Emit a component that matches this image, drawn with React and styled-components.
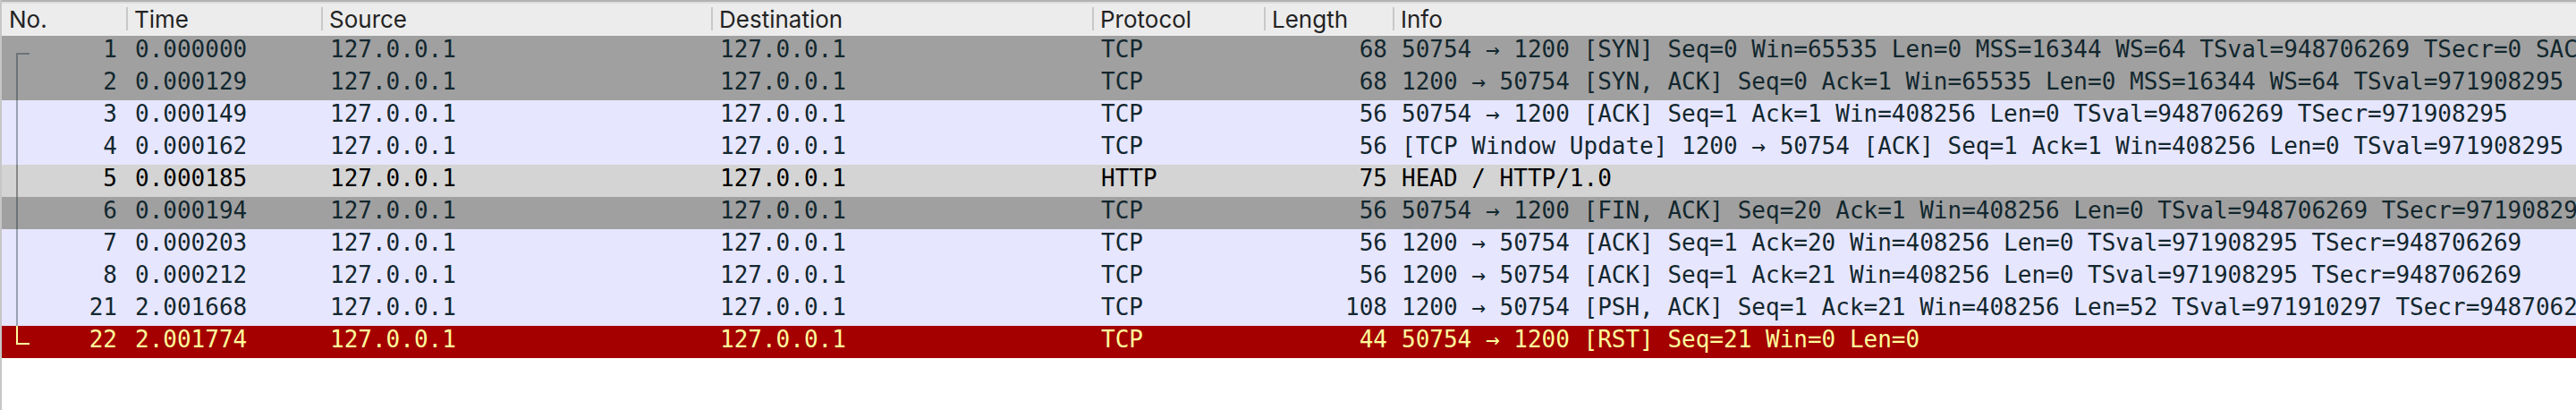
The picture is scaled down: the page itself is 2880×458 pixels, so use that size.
import React from 'react'
import styled, { createGlobalStyle } from 'styled-components'

const GlobalStyle = createGlobalStyle`
  html, body {
    margin: 0;
    padding: 0;
    background: #ffffff;
  }
`

const columns = '139px 218px 436px 426px 192px 144px 1fr'

const Table = styled.div`
  width: 2880px;
  height: 458px;
  box-sizing: border-box;
  border-left: 2px solid #c6c6c6;
  background: #ffffff;
  overflow: hidden;
`

const HeaderRow = styled.div`
  display: grid;
  grid-template-columns: ${columns};
  align-items: center;
  height: 40px;
  box-sizing: border-box;
  border-top: 2px solid #b2b2b2;
  box-shadow: inset 0 2px 0 #dddddd;
  background: #ececec;
`

const HeaderCell = styled.div`
  display: flex;
  align-items: center;
  height: 26px;
  padding-left: ${p => (p.$first ? '8px' : '7px')};
  border-left: ${p => (p.$first ? 'none' : '2px solid #c8c8c8')};
  font-family: Inter, 'Noto Sans', sans-serif;
  font-size: 26px;
  line-height: 31px;
  color: #232323;
  white-space: nowrap;
`

const Row = styled.div`
  display: grid;
  grid-template-columns: ${columns};
  height: 36px;
  background: ${p => p.$bg};
  color: ${p => p.$fg};
  font-family: 'DejaVu Sans Mono', 'Liberation Mono', monospace;
  font-size: 26px;
`

const Cell = styled.div`
  height: 36px;
  line-height: 30px;
  padding: 0 ${p => p.$padRight ?? 10}px 0 10px;
  text-align: ${p => p.$align || 'left'};
  white-space: pre;
  overflow: hidden;
`

const NoCell = styled.div`
  display: flex;
  height: 36px;
`

const Num = styled.span`
  flex: 1;
  line-height: 30px;
  padding-right: 10px;
  text-align: right;
`

const TreeMark = ({ kind, strong }) => (
  <svg width="40" height="36" viewBox="0 0 40 36" style={{ flexShrink: 0 }}>
    <g stroke="currentColor" strokeWidth="2" opacity={strong ? 1 : 0.36} fill="none">
      {kind === 'first' && <path d="M17 36 V20 H31" />}
      {kind === 'mid' && <path d="M17 0 V36" />}
      {kind === 'last' && <path d="M17 0 V20 H31" />}
    </g>
  </svg>
)

const palette = {
  syn: { bg: '#a0a0a0', fg: '#12272e' },
  tcp: { bg: '#e7e6ff', fg: '#12272e' },
  sel: { bg: '#d4d4d4', fg: '#000000' },
  rst: { bg: '#a40000', fg: '#fffc9c' },
}

const packets = [
  { no: 1, time: '0.000000', proto: 'TCP', len: 68, kind: 'syn', info: '50754 → 1200 [SYN] Seq=0 Win=65535 Len=0 MSS=16344 WS=64 TSval=948706269 TSecr=0 SACK_PERM' },
  { no: 2, time: '0.000129', proto: 'TCP', len: 68, kind: 'syn', info: '1200 → 50754 [SYN, ACK] Seq=0 Ack=1 Win=65535 Len=0 MSS=16344 WS=64 TSval=971908295 TSecr=948706269 SACK_PERM' },
  { no: 3, time: '0.000149', proto: 'TCP', len: 56, kind: 'tcp', info: '50754 → 1200 [ACK] Seq=1 Ack=1 Win=408256 Len=0 TSval=948706269 TSecr=971908295' },
  { no: 4, time: '0.000162', proto: 'TCP', len: 56, kind: 'tcp', info: '[TCP Window Update] 1200 → 50754 [ACK] Seq=1 Ack=1 Win=408256 Len=0 TSval=971908295 TSecr=948706269' },
  { no: 5, time: '0.000185', proto: 'HTTP', len: 75, kind: 'sel', info: 'HEAD / HTTP/1.0' },
  { no: 6, time: '0.000194', proto: 'TCP', len: 56, kind: 'syn', info: '50754 → 1200 [FIN, ACK] Seq=20 Ack=1 Win=408256 Len=0 TSval=948706269 TSecr=971908295' },
  { no: 7, time: '0.000203', proto: 'TCP', len: 56, kind: 'tcp', info: '1200 → 50754 [ACK] Seq=1 Ack=20 Win=408256 Len=0 TSval=971908295 TSecr=948706269' },
  { no: 8, time: '0.000212', proto: 'TCP', len: 56, kind: 'tcp', info: '1200 → 50754 [ACK] Seq=1 Ack=21 Win=408256 Len=0 TSval=971908295 TSecr=948706269' },
  { no: 21, time: '2.001668', proto: 'TCP', len: 108, kind: 'tcp', info: '1200 → 50754 [PSH, ACK] Seq=1 Ack=21 Win=408256 Len=52 TSval=971910297 TSecr=948706269' },
  { no: 22, time: '2.001774', proto: 'TCP', len: 44, kind: 'rst', info: '50754 → 1200 [RST] Seq=21 Win=0 Len=0' },
]

const headers = ['No.', 'Time', 'Source', 'Destination', 'Protocol', 'Length', 'Info']

const App = () => {
  return (
    <>
      <GlobalStyle />
      <Table>
        <HeaderRow>
          {headers.map((h, i) => (
            <HeaderCell key={h} $first={i === 0}>{h}</HeaderCell>
          ))}
        </HeaderRow>
        {packets.map((p, i) => {
          const c = palette[p.kind]
          const tree = i === 0 ? 'first' : i === packets.length - 1 ? 'last' : 'mid'
          return (
            <Row key={p.no} $bg={c.bg} $fg={c.fg}>
              <NoCell>
                <TreeMark kind={tree} strong={p.kind === 'rst'} />
                <Num>{p.no}</Num>
              </NoCell>
              <Cell>{p.time}</Cell>
              <Cell>127.0.0.1</Cell>
              <Cell>127.0.0.1</Cell>
              <Cell>{p.proto}</Cell>
              <Cell $align="right" $padRight={6}>{p.len}</Cell>
              <Cell $padRight={0}>{p.info}</Cell>
            </Row>
          )
        })}
      </Table>
    </>
  )
}

export default App
